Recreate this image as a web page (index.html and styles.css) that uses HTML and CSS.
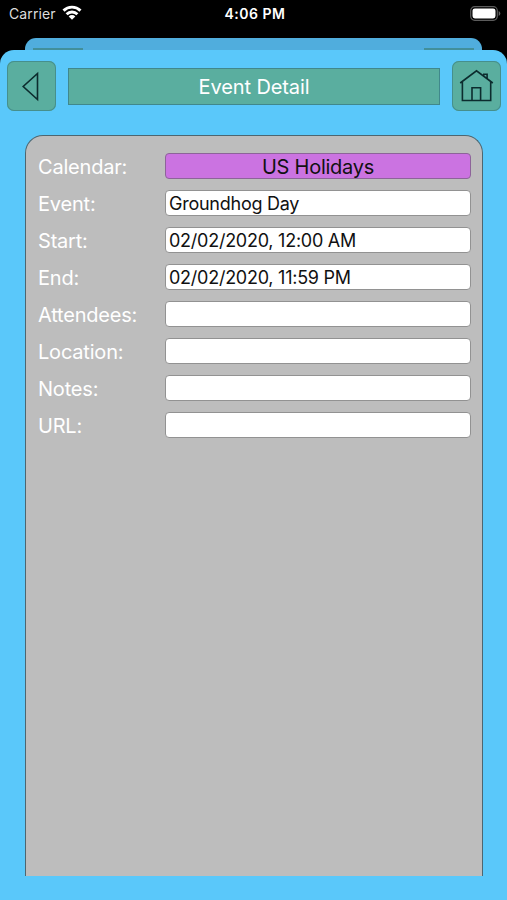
FILE: index.html
```html
<!DOCTYPE html>
<html lang="en">
<head>
<meta charset="utf-8">
<title>Event Detail</title>
<link rel="stylesheet" href="styles.css">
</head>
<body>
<div class="status">
  <div class="carrier"><span>Carrier</span>
    <svg width="20" height="15" viewBox="0 0 20 15" fill="none" stroke="#fff" stroke-width="2.9"><path d="M1.5 5.6a12.2 12.2 0 0 1 17 0M4.6 9.2a7.7 7.7 0 0 1 10.8 0"/><path d="M10 14.8 6.7 11.5a4.6 4.6 0 0 1 6.6 0z" fill="#fff" stroke="none"/></svg>
  </div>
  <span class="time">4:06 PM</span>
  <svg class="battery" width="31" height="15" viewBox="0 0 31 15"><rect x=".7" y=".7" width="26.6" height="13.6" rx="4" fill="#000" stroke="#5c5c5c" stroke-width="1.2"/><rect x="2.5" y="2.4" width="23" height="10" rx="2.4" fill="#fff"/><path d="M28.7 5v5q1.6-.8 1.6-2.5T28.7 5" fill="#666"/></svg>
</div>
<div class="behind"><i></i><i></i></div>
<main class="sheet">
  <header class="bar">
    <button class="key" aria-label="Back"><svg width="49" height="50" viewBox="0 0 49 50"><path d="M30.5 12.5v26L16.2 25.5z"/></svg></button>
    <h1><span>Event Detail</span></h1>
    <button class="key" aria-label="Home"><svg width="49" height="50" viewBox="0 0 49 50"><path d="M8.2 22 24.5 9.8 40.8 22M10.4 20.7v18.8h28.3V20.7M20 39.2V26.7h8.6v12.5M31.8 14.6v-1.4h3.3v4.3"/></svg></button>
  </header>
  <section class="panel">
    <div class="row"><label>Calendar:</label><div class="field tag">US Holidays</div></div>
    <div class="row"><label>Event:</label><div class="field">Groundhog Day</div></div>
    <div class="row"><label>Start:</label><div class="field">02/02/2020, 12:00 AM</div></div>
    <div class="row"><label>End:</label><div class="field">02/02/2020, 11:59 PM</div></div>
    <div class="row"><label>Attendees:</label><div class="field"></div></div>
    <div class="row"><label>Location:</label><div class="field"></div></div>
    <div class="row"><label>Notes:</label><div class="field"></div></div>
    <div class="row"><label>URL:</label><div class="field"></div></div>
  </section>
</main>
</body>
</html>
```
FILE: styles.css
```css
* { box-sizing: border-box; }
body {
  margin: 0;
  height: 900px;
  overflow: hidden;
  display: flex;
  flex-direction: column;
  background: #000;
  font-family: Inter, "Liberation Sans", sans-serif;
}
svg { display: block; }
.status {
  height: 38px;
  padding: 0 6px 11px 9px;
  display: grid;
  grid-template-columns: 1fr auto 1fr;
  align-items: center;
  color: #fff;
  font-size: 14px;
}
.carrier { display: flex; align-items: center; gap: 6px; color: #ddd; letter-spacing: .12px; }
.carrier svg { margin-top: -2px; }
.time { font-weight: 600; font-size: 14px; letter-spacing: .5px; }
.battery { justify-self: end; }
.behind {
  height: 12px;
  flex: none;
  margin: 0 25px;
  padding: 10px 8px 0;
  display: flex;
  justify-content: space-between;
  background: #50addd;
  border-radius: 11px 11px 0 0;
}
.behind i { width: 50px; height: 2px; background: #428f9a; }
.sheet {
  flex: 1;
  min-height: 0;
  padding: 11px 6px 24px 7px;
  display: flex;
  flex-direction: column;
  background: #5ac8fa;
  border-radius: 14px 14px 0 0;
}
.bar { height: 50px; flex: none; display: flex; align-items: center; gap: 12px; }
.key {
  width: 49px;
  height: 50px;
  padding: 0;
  border: 0;
  border-radius: 7px;
  background: #5aae9f;
  box-shadow: inset 0 0 0 1px #468f8c;
}
.key svg { fill: none; stroke: #0c2c2e; stroke-width: 1.6; }
.bar h1 {
  flex: 1;
  height: 37px;
  margin: 0;
  border: 1px solid #40888c;
  background: #5aae9f;
  color: #fff;
  font-size: 20px;
  font-weight: 400;
  line-height: 36px;
  letter-spacing: -.1px;
  text-align: center;
}
.panel {
  flex: 1;
  margin: 24px 18px 0;
  padding: 17px 11px 0 12px;
  border: 1px solid #4d6670;
  border-bottom: 0;
  border-radius: 18px 18px 0 0;
  background: #bdbdbd;
}
.row { height: 37px; display: flex; align-items: flex-start; }
.row label { width: 127px; color: #fff; font-size: 20px; line-height: 28px; letter-spacing: -.2px; }
.field {
  flex: 1;
  height: 26px;
  padding-left: 3px;
  border: 1px solid #929292;
  border-radius: 4px;
  background: #fff;
  color: #111;
  font-size: 18px;
  line-height: 25px;
  letter-spacing: -.25px;
}
.tag { padding: 0; background: #cb73e1; border-color: #8d6499; font-size: 20px; line-height: 26px; text-align: center; }
```
